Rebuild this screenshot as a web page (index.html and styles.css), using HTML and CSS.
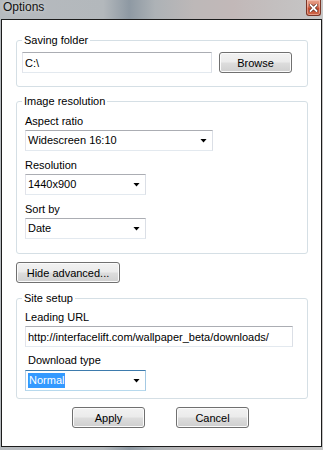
FILE: index.html
```html
<!DOCTYPE html>
<html lang="en">
<head>
    <meta charset="UTF-8">
    <meta name="viewport" content="width=device-width, initial-scale=1.0">
    <title>Options</title>
    <link rel="stylesheet" href="styles.css">
</head>
<body>
    <div class="titlebar">
        <span class="title">Options</span>
        <span class="close-btn">
            <svg width="9" height="8" viewBox="0 0 9 8">
                <path d="M1.5 1 L7.5 7 M7.5 1 L1.5 7" stroke="#5a2a20" stroke-width="3.2" stroke-linecap="square"/>
                <path d="M1.5 1 L7.5 7 M7.5 1 L1.5 7" stroke="#fff" stroke-width="1.8" stroke-linecap="square"/>
            </svg>
        </span>
    </div>
    <div class="window">
        <fieldset class="group group-folder">
            <legend>Saving folder</legend>
            <div class="row">
                <input type="text" class="textbox folder-box" value="C:\">
                <button class="button browse-btn">Browse</button>
            </div>
        </fieldset>

        <fieldset class="group group-resolution">
            <legend>Image resolution</legend>
            <div class="field">
                <div class="label">Aspect ratio</div>
                <div class="combo combo-wide"><span>Widescreen 16:10</span></div>
            </div>
            <div class="field">
                <div class="label">Resolution</div>
                <div class="combo"><span>1440x900</span></div>
            </div>
            <div class="field">
                <div class="label">Sort by</div>
                <div class="combo"><span>Date</span></div>
            </div>
        </fieldset>

        <button class="button advanced-btn">Hide advanced...</button>

        <fieldset class="group group-site">
            <legend>Site setup</legend>
            <div class="field">
                <div class="label">Leading URL</div>
                <input type="text" class="textbox url-box" value="http://interfacelift.com/wallpaper_beta/downloads/">
            </div>
            <div class="field field-type">
                <div class="label label-indent">Download type</div>
                <div class="combo combo-focus"><span class="selected">Normal</span></div>
            </div>
        </fieldset>

        <div class="actions">
            <button class="button action-btn">Apply</button>
            <button class="button action-btn">Cancel</button>
        </div>
    </div>
</body>
</html>
```

FILE: styles.css
```css
html, body {
    margin: 0;
    height: 450px;
    overflow: hidden;
}
body {
    font-family: 'Liberation Sans', Arial, sans-serif;
    font-size: 11px;
    color: #000;
    background: linear-gradient(to right, #b6babe 0%, #b3b8bc 32%, #8e99a3 40%, #adb2b6 48%, #bdb8b8 60%, #c2b8b8 72%, #c3bfbf 85%, #c6c6c6 100%);
}
.titlebar {
    height: 19px;
    display: flex;
    justify-content: space-between;
    align-items: flex-start;
}
.title {
    font-size: 12px;
    line-height: 14px;
    margin-left: 3px;
    color: #111;
    text-shadow: 0 0 4px rgba(255,255,255,0.6);
}
.close-btn {
    box-sizing: border-box;
    width: 15px;
    height: 16px;
    margin-right: 2px;
    display: flex;
    align-items: center;
    justify-content: center;
    border: 1px solid #7a3526;
    border-top: none;
    border-radius: 0 0 3px 3px;
    background: linear-gradient(#e9a48e 0%, #d9775d 45%, #c44a2e 55%, #cf6a4c 100%);
    box-shadow: inset 0 0 0 1px rgba(255,220,210,0.45);
}
.window {
    box-sizing: border-box;
    width: 321px;
    height: 428px;
    margin-left: 1px;
    background: #fff;
    border: 1px solid #1c1c1c;
    overflow: hidden;
}
.group {
    box-sizing: border-box;
    width: 292px;
    margin: 7px 0 0 14px;
    padding: 0 5px;
    border: 1px solid #d5dfe5;
    border-radius: 3px;
    min-inline-size: 0;
}
.group legend {
    padding: 0 2px;
    line-height: 15px;
    font-size: 11px;
}
.group-folder {
    margin-top: 13px;
    padding-top: 4px;
    padding-bottom: 13px;
}
.group-resolution {
    padding-top: 5px;
    padding-bottom: 14px;
}
.group-site {
    margin-top: 8px;
    padding-top: 4px;
    padding-bottom: 7px;
}
.row {
    display: flex;
    gap: 7px;
}
.field {
    margin-left: 3px;
    margin-top: 7px;
}
.field:first-of-type {
    margin-top: 0;
}
.field-type {
    margin-top: 6px;
}
.label {
    line-height: 15px;
    height: 15px;
    margin-bottom: 1px;
}
.label-indent {
    padding-left: 3px;
    margin-bottom: 2px;
}
.textbox {
    box-sizing: border-box;
    height: 21px;
    margin: 0;
    padding: 0 2px;
    font-family: 'Liberation Sans', Arial, sans-serif;
    font-size: 11px;
    color: #000;
    background: #fff;
    border: 1px solid;
    border-color: #abadb3 #dbdfe6 #e3e9ef #e2e3ea;
    border-radius: 0;
    outline: none;
}
.folder-box {
    width: 190px;
}
.url-box {
    width: 268px;
}
.combo {
    box-sizing: border-box;
    width: 121px;
    height: 21px;
    display: flex;
    align-items: center;
    padding: 0 5px 0 2px;
    background: #fff;
    border: 1px solid;
    border-color: #abadb3 #dbdfe6 #e3e9ef #e2e3ea;
}
.combo span {
    flex: 1;
    line-height: 15px;
}
.combo::after {
    content: "";
    width: 7px;
    height: 4px;
    background: #000;
    clip-path: polygon(0 0, 100% 0, 50% 100%);
}
.combo-wide {
    width: 188px;
}
.combo-focus {
    border-color: #3d7bad #a4c9e3 #b7d9ed #b5cfe7;
}
.combo .selected {
    flex: none;
    background: #3399ff;
    color: #fff;
    padding: 0 1px;
    margin-right: auto;
}
.button {
    box-sizing: border-box;
    height: 21px;
    margin: 0;
    padding: 0;
    font-family: 'Liberation Sans', Arial, sans-serif;
    font-size: 11px;
    color: #000;
    border: 1px solid #707070;
    border-radius: 3px;
    background: linear-gradient(#f2f2f2 0%, #ebebeb 48%, #dddddd 52%, #cfcfcf 100%);
    box-shadow: inset 0 0 0 1px #fbfbfb;
}
.browse-btn {
    width: 73px;
}
.advanced-btn {
    display: block;
    width: 104px;
    margin: 8px 0 0 14px;
}
.actions {
    display: flex;
    gap: 31px;
    margin-top: 8px;
    padding-left: 70px;
}
.action-btn {
    width: 73px;
}
```
